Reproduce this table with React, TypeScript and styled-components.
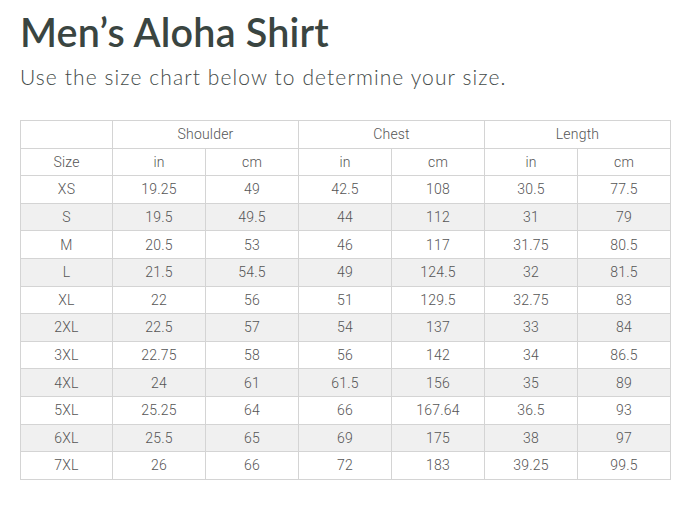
import React from "react";
import styled, { createGlobalStyle } from "styled-components";

const GlobalStyle = createGlobalStyle`
  html, body { margin: 0; padding: 0; background: #ffffff; }
  body { font-family: "Open Sans", "Liberation Sans", Arial, sans-serif; }
`;

const Page = styled.div`
  width: 685px;
  height: 515px;
  box-sizing: border-box;
  padding: 8px 15px 0 20px;
  background: #fff;
`;

const Title = styled.h1`
  margin: 0;
  font-family: "Lato", "Liberation Sans", sans-serif;
  font-weight: 600;
  font-size: 39.5px;
  line-height: 47px;
  color: #3a4541;
  letter-spacing: 0.2px;
`;

const Subtitle = styled.p`
  margin: 9px 0 0 0;
  font-family: "Lato", "Liberation Sans", sans-serif;
  font-weight: 300;
  font-size: 21px;
  line-height: 26px;
  color: #444b49;
  letter-spacing: 1.1px;
`;

const Table = styled.table`
  margin-top: 30px;
  width: 650px;
  border-collapse: collapse;
  table-layout: fixed;
  font-family: "Roboto", "Liberation Sans", sans-serif;
  font-weight: 300;
  font-size: 14px;
  letter-spacing: 0.2px;
  color: #555555;
`;

const Row = styled.tr<{ $striped?: boolean }>`
  height: 27.6px;
  background: ${(p) => (p.$striped ? "#f0f0f0" : "#ffffff")};
`;

const Cell = styled.td`
  border: 1px solid #d4d4d4;
  text-align: center;
  vertical-align: middle;
  padding: 0;
  height: 26.6px;
`;

const groups = ["Shoulder", "Chest", "Length"];

const data: string[][] = [
  ["XS", "19.25", "49", "42.5", "108", "30.5", "77.5"],
  ["S", "19.5", "49.5", "44", "112", "31", "79"],
  ["M", "20.5", "53", "46", "117", "31.75", "80.5"],
  ["L", "21.5", "54.5", "49", "124.5", "32", "81.5"],
  ["XL", "22", "56", "51", "129.5", "32.75", "83"],
  ["2XL", "22.5", "57", "54", "137", "33", "84"],
  ["3XL", "22.75", "58", "56", "142", "34", "86.5"],
  ["4XL", "24", "61", "61.5", "156", "35", "89"],
  ["5XL", "25.25", "64", "66", "167.64", "36.5", "93"],
  ["6XL", "25.5", "65", "69", "175", "38", "97"],
  ["7XL", "26", "66", "72", "183", "39.25", "99.5"],
];

export default function App() {
  return (
    <>
      <GlobalStyle />
      <Page>
        <Title>Men’s Aloha Shirt</Title>
        <Subtitle>Use the size chart below to determine your size.</Subtitle>
        <Table>
          <colgroup>
            <col style={{ width: 92 }} />
            {Array.from({ length: 6 }).map((_, i) => (
              <col key={i} style={{ width: 93 }} />
            ))}
          </colgroup>
          <tbody>
            <Row>
              <Cell />
              {groups.map((g) => (
                <Cell key={g} colSpan={2}>
                  {g}
                </Cell>
              ))}
            </Row>
            <Row>
              <Cell>Size</Cell>
              {groups.map((g) => (
                <React.Fragment key={g}>
                  <Cell>in</Cell>
                  <Cell>cm</Cell>
                </React.Fragment>
              ))}
            </Row>
            {data.map((r, i) => (
              <Row key={r[0]} $striped={i % 2 === 1}>
                {r.map((v, j) => (
                  <Cell key={j}>{v}</Cell>
                ))}
              </Row>
            ))}
          </tbody>
        </Table>
      </Page>
    </>
  );
}
